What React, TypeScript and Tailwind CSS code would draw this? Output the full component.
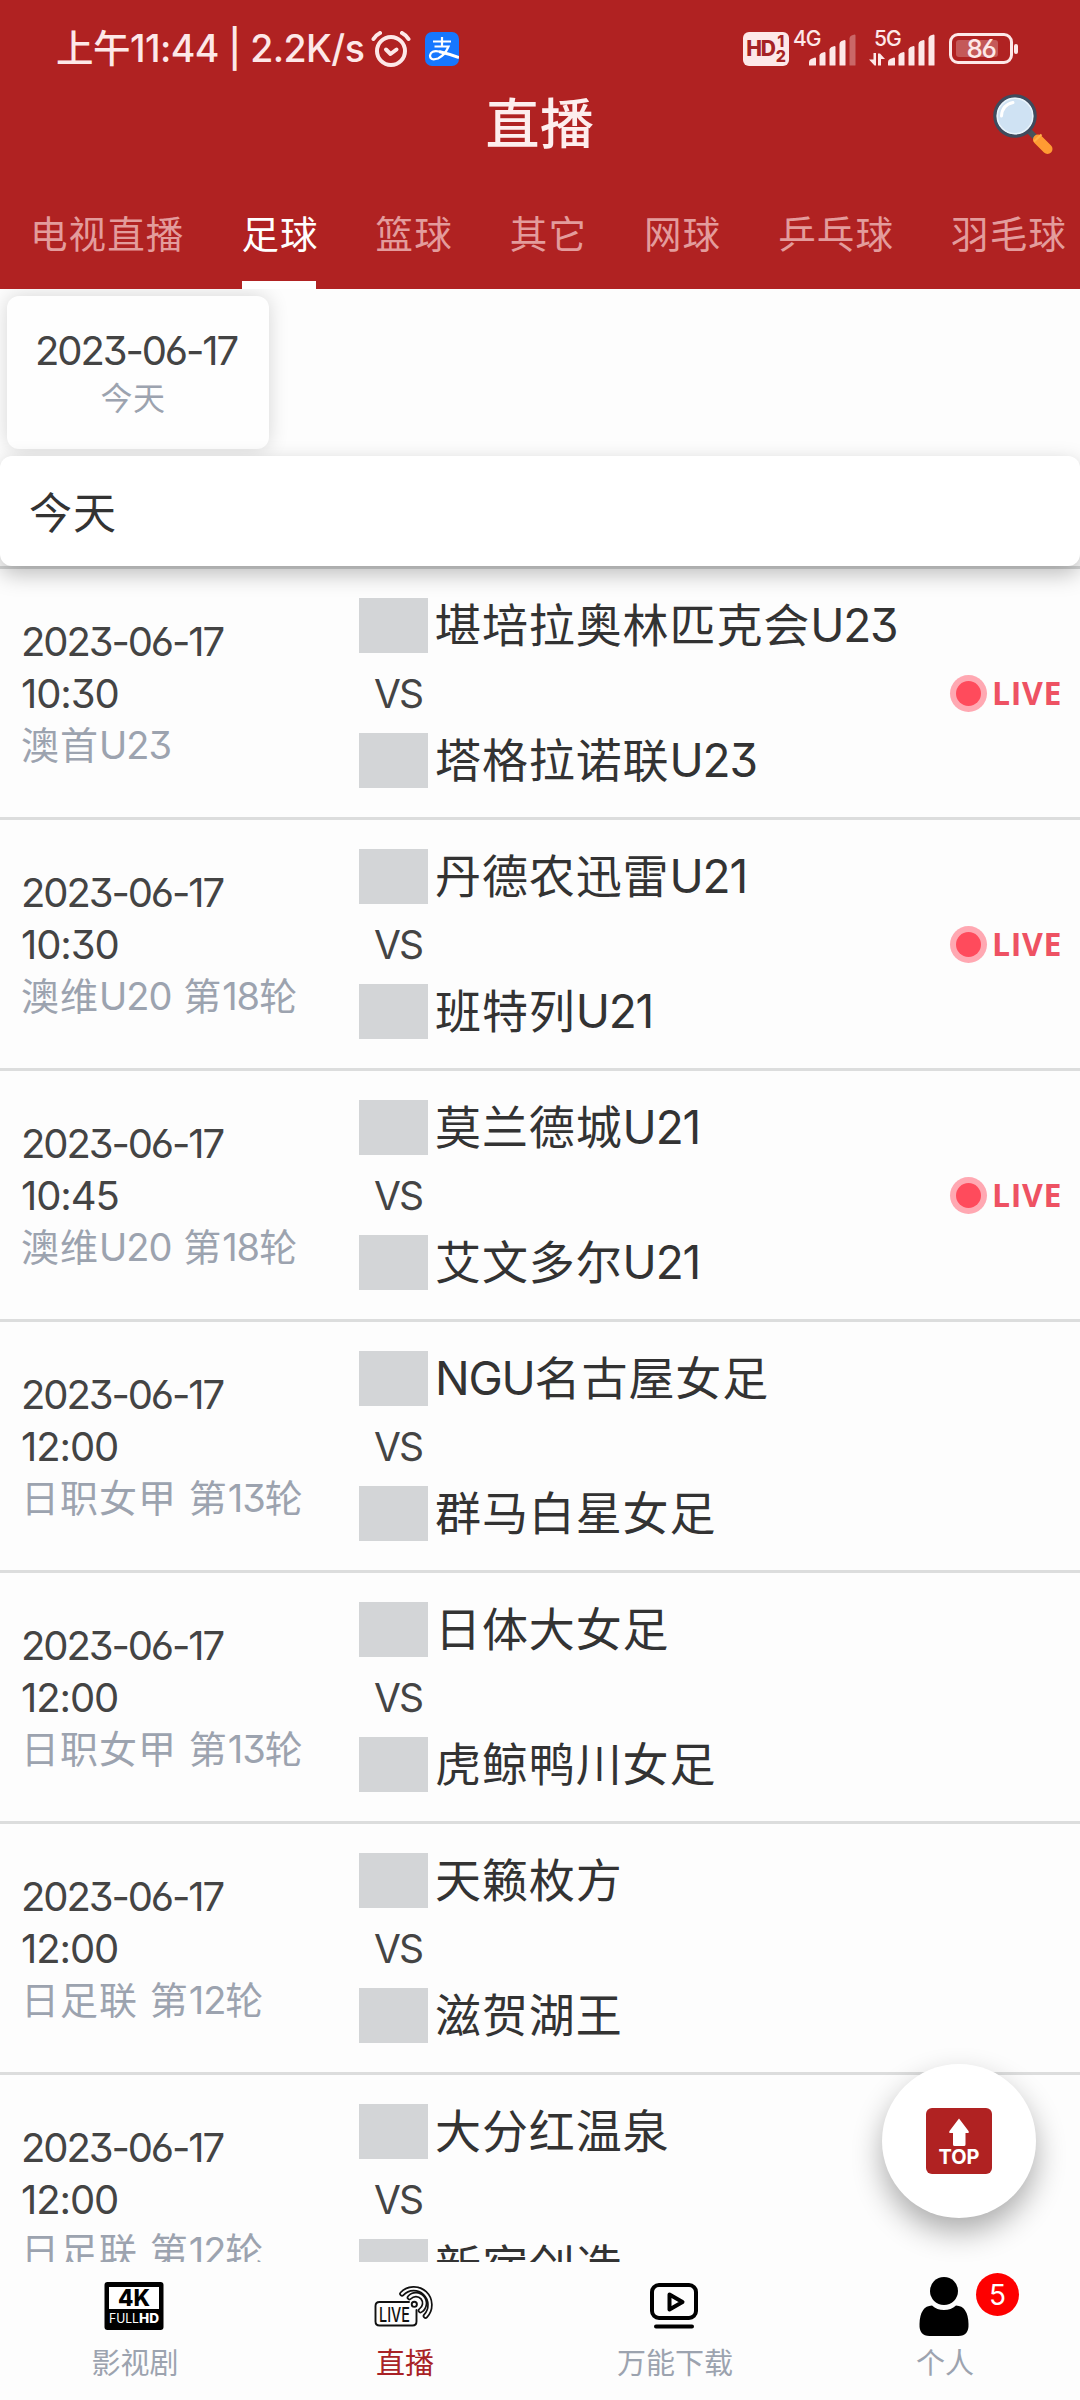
import React from "react";

const tabs = ["电视直播", "足球", "篮球", "其它", "网球", "乒乓球", "羽毛球"];

type Match = { time: string; league: string; home: string; away: string; live?: boolean };

const matches: Match[] = [
  { time: "10:30", league: "澳首U23", home: "堪培拉奥林匹克会U23", away: "塔格拉诺联U23", live: true },
  { time: "10:30", league: "澳维U20 第18轮", home: "丹德农迅雷U21", away: "班特列U21", live: true },
  { time: "10:45", league: "澳维U20 第18轮", home: "莫兰德城U21", away: "艾文多尔U21", live: true },
  { time: "12:00", league: "日职女甲 第13轮", home: "NGU名古屋女足", away: "群马白星女足" },
  { time: "12:00", league: "日职女甲 第13轮", home: "日体大女足", away: "虎鲸鸭川女足" },
  { time: "12:00", league: "日足联 第12轮", home: "天籁枚方", away: "滋贺湖王" },
  { time: "12:00", league: "日足联 第12轮", home: "大分红温泉", away: "新宿创造" },
];

/* Latin runs are set tighter than the Chinese ones; spaces stay with the Chinese spacing. */
function Mixed({ text, latin }: { text: string; latin: string }) {
  const runs = text.match(/[\x21-\x7e]+|[^\x21-\x7e]+/g) ?? [];
  return (
    <>
      {runs.map((r, i) => (/^[\x21-\x7e]/.test(r) ? <span key={i} className={latin}>{r}</span> : <span key={i}>{r}</span>))}
    </>
  );
}

function Bars({ dim }: { dim?: boolean }) {
  return (
    <svg width="48" height="32" viewBox="0 0 48 32" fill="#fde8e8">
      <path d="M0 31v-3q0-2 2-3l4-1.500q1 0 1 1V31q0 .5-.5.5h-6Q0 31.500 0 31Z" />
      <path d="M10.500 31V21.500q0-1.500 2-2.500l3-1q1 0 1 1v12q0 .5-.5.5h-5Q10.500 31.500 10.500 31Z" />
      <path d="M20.500 31V15.500q0-1.500 2-2.500l3-1q1 0 1 1v18q0 .5-.5.5h-5Q20.500 31.500 20.500 31Z" />
      <path d="M30.500 31V10q0-2 2-3l3-1q1 0 1 1v24q0 .5-.5.5h-5Q30.500 31.500 30.500 31Z" />
      <path opacity={dim ? 0.35 : 1} d="M40.500 31V4.500q0-2 2-3l3-1q1 0 1 1V31q0 .5-.5.5h-5Q40.500 31.500 40.500 31Z" />
    </svg>
  );
}

function StatusBar() {
  return (
    <div className="flex h-[98px] items-start pl-[56px] pr-[62px] pt-[31px] text-[#fde8e8]">
      <div className="flex h-9 w-[315px] items-center whitespace-nowrap text-[37.5px] font-medium leading-9 tracking-[-0.55px]">
        上午11:44 | 2.2K/s
      </div>
      <svg className="h-9 w-10" viewBox="0 0 40 36" fill="none" stroke="#fde8e8" strokeWidth="4" strokeLinecap="round" strokeLinejoin="round">
        <circle cx="20" cy="20" r="14" />
        <path d="M2.500 8Q5 4 9 2M37.500 8Q35 4 31 2" />
        <path d="m15 18.500 4.500 4.500 6-4.500" />
      </svg>
      <svg className="ml-3.5 mt-px h-[34px] w-[34px]" viewBox="0 0 34 34">
        <rect width="34" height="34" rx="7" fill="#1677ff" />
        <g fill="none" stroke="#fff" strokeWidth="2.200">
          <path d="M8 9.500h18M17 5v9.500M9.500 14.500h14Q20 23 13 26.500 5 29 5 23.500 6 18 14 19.500" />
          <path d="M14 19.500Q24 22 34 25.500" strokeWidth="3" />
        </g>
      </svg>
      <div className="ml-auto flex h-9 items-start pt-px">
        <div className="flex h-[34px] w-[46px] items-center justify-center gap-px rounded-[6px] bg-[#fde8e8] text-[#a52224]">
          <span className="text-[21px] font-extrabold leading-5 tracking-[-1.2px]">HD</span>
          <span className="flex flex-col items-center text-[16px] font-extrabold leading-[15px]">
            <span>1</span>
            <span>2</span>
          </span>
        </div>
        <div className="relative ml-5 h-[34px] w-12 pt-0.5">
          <span className="absolute -left-4 -top-[3px] text-[21px] font-medium leading-5 tracking-[-1px]">4G</span>
          <Bars dim />
        </div>
        <div className="relative ml-[31px] h-[34px] w-12 pt-0.5">
          <span className="absolute -left-3.5 -top-[3px] text-[21px] font-medium leading-5 tracking-[-1px]">5G</span>
          <svg className="absolute -left-[19px] top-[21px]" width="16" height="13" viewBox="0 0 16 13" fill="#fde8e8">
            <path d="M4.500 0H7v12.500H5.500L0 6.500h4.500ZM9 .5h2l5 5.500h-4v6.500H9Z" />
          </svg>
          <Bars />
        </div>
        <div className="ml-[13px] mt-px flex items-center">
          <div className="relative flex h-[31px] w-[64px] items-center justify-center rounded-[9px] border-[3px] border-[#fde8e8]">
            <div className="absolute left-[4px] top-[4px] h-[17px] w-[42px] rounded-[3px] bg-white/25" />
            <span className="relative text-[26px] font-medium leading-6 tracking-[-1.5px]">86</span>
          </div>
          <div className="ml-px h-2.5 w-1 rounded-sm bg-[#fde8e8]" />
        </div>
      </div>
    </div>
  );
}

function Magnifier() {
  return (
    <svg className="h-[62px] w-[60px]" viewBox="0 0 60 62">
      <path d="m36 38 7 7" stroke="#46535c" strokeWidth="6" />
      <path d="m45 46.500 9.500 9.500" stroke="#ff9b33" strokeWidth="10" strokeLinecap="round" />
      <path d="m41 48.500 7.500-7" stroke="#ffb24a" strokeWidth="2" />
      <circle cx="22" cy="23" r="20" fill="#cfe2f3" stroke="#3f4b5d" strokeWidth="3.500" />
      <circle cx="22" cy="23" r="17.800" fill="none" stroke="#eaf4fb" strokeWidth="1.500" />
      <path d="M8.500 23Q9 12 20 9.500" fill="none" stroke="#fff" strokeWidth="3" strokeLinecap="round" />
    </svg>
  );
}

function Team({ name }: { name: string }) {
  return (
    <div className="flex h-[55px] items-center">
      <div className="h-[55px] w-[69px] bg-[#d3d5d7]" />
      <div className="ml-[7px] text-[46px] leading-[55px] tracking-[0.9px]">
        <Mixed text={name} latin="tracking-[-1.2px]" />
      </div>
    </div>
  );
}

function MatchRow({ m }: { m: Match }) {
  return (
    <div className="flex h-[251px] shrink-0 border-b-[3px] border-[#dcdddd]">
      <div className="w-[359px] shrink-0 whitespace-nowrap pl-[21px] pt-[47px] text-[40px] leading-[52px] text-[#444]">
        <div className="tracking-[-2.1px]">2023-06-17</div>
        <div className="tracking-[-1.1px]">{m.time}</div>
        <div className="-mt-px text-[38px] tracking-[1px] text-[#9ca3af]">
          <Mixed text={m.league} latin="tracking-[-1px]" />
        </div>
      </div>
      <div className="flex flex-1 flex-col whitespace-nowrap pt-[29px] text-[#333]">
        <Team name={m.home} />
        <div className="flex h-20 items-center pl-[15px] pt-px text-[39px] leading-[52px] tracking-[-2px] text-[#444]">VS</div>
        <Team name={m.away} />
      </div>
      {m.live && (
        <div className="flex w-[130px] items-center">
          <div className="flex h-[37px] w-[37px] shrink-0 items-center justify-center rounded-full bg-[#ffa8b2]">
            <div className="h-[25px] w-[25px] rounded-full bg-[#ff4b5c]" />
          </div>
          <span className="ml-[5px] font-['Open_Sans'] text-[32px] font-bold leading-9 tracking-[0.7px] text-[#ee5263]">LIVE</span>
        </div>
      )}
    </div>
  );
}

const Icon4K = () => (
  <svg width="60" height="48" viewBox="0 0 60 48">
    <rect x=".5" width="59" height="48" rx="3" fill="#000" />
    <rect x="5" y="5" width="50" height="22" fill="#fff" />
    <text x="30" y="24" textAnchor="middle" textLength="32" lengthAdjust="spacingAndGlyphs" fontFamily="Inter" fontWeight="800" fontSize="23">4K</text>
    <text x="5" y="41" textLength="30" lengthAdjust="spacingAndGlyphs" fontFamily="Inter" fontSize="13" fill="#fff">FULL</text>
    <text x="35" y="41" textLength="20" lengthAdjust="spacingAndGlyphs" fontFamily="Inter" fontWeight="800" fontSize="13" fill="#fff">HD</text>
  </svg>
);

const IconLive = () => (
  <svg width="60" height="42" viewBox="0 0 60 42" fill="none" stroke="#111" strokeWidth="1.900" strokeLinecap="round">
    <path d="M35 17H5.500Q1.500 17 1.500 21v15.500q0 4 4 4h33q4 0 4-4V25" />
    <circle cx="40.300" cy="19.300" r="2.600" />
    <g strokeWidth="5.600">
      <path d="M28 8.800A16 16 0 1 1 51.500 31" />
      <path d="M35.500 12.500A8.600 8.600 0 1 1 46.500 25.500" />
    </g>
    <g stroke="#fdfdfd" strokeWidth="2.200">
      <path d="M28 8.800A16 16 0 1 1 51.500 31" />
      <path d="M35.500 12.500A8.600 8.600 0 1 1 46.500 25.500" />
    </g>
    <text x="5" y="36.500" textLength="31" lengthAdjust="spacingAndGlyphs" fontFamily="Inter" fontWeight="500" fontSize="20" fill="#111" stroke="none">LIVE</text>
  </svg>
);

const IconPlay = () => (
  <svg width="48" height="46" viewBox="0 0 48 46" fill="none" stroke="#000" strokeWidth="4" strokeLinecap="round" strokeLinejoin="round">
    <rect x="2" y="2" width="44" height="33" rx="7" />
    <path d="m19.500 11.500 13 7.500-13 7.500ZM6 43.500h36" />
  </svg>
);

const IconUser = () => (
  <svg width="50" height="59" viewBox="0 0 50 59">
    <circle cx="25" cy="14" r="14" />
    <path d="M13 28.500Q18 33 25 33t12-4.500Q49 29 49.500 47q.5 12-10 12h-29Q0 59 .5 47 1 29 13 28.500Z" />
  </svg>
);

const navItems = [
  { label: "影视剧", icon: <Icon4K /> },
  { label: "直播", icon: <IconLive />, active: true },
  { label: "万能下载", icon: <IconPlay /> },
  { label: "个人", icon: <IconUser />, badge: "5" },
];

export default function App() {
  return (
    <div
      className={`relative flex h-[2400px] w-[1080px] flex-col overflow-hidden bg-[#fdfdfd] font-["Inter","Noto_Sans_CJK_SC",sans-serif] [font-feature-settings:"cv09","cv03","cv04"]`}
      lang="zh-CN"
    >
      <header className="relative z-10 flex h-[289px] shrink-0 flex-col bg-[#b02222]">
        <StatusBar />
        <div className="flex h-[54px] items-center justify-between">
          <div className="w-[87px]" />
          <h1 className="text-[54px] font-medium leading-[54px] tracking-[0.5px] text-[#fdeeee]">直播</h1>
          <div className="-mt-0.5 w-[87px]"><Magnifier /></div>
        </div>
        <nav className="flex flex-1 gap-[57px] pl-[30px]">
          {tabs.map((t, i) => (
            <div key={t} className={i === 1 ? "flex shrink-0 flex-col justify-between text-white" : "shrink-0 text-[#e39c9c]"}>
              <div className="whitespace-nowrap pt-[56px] text-[37.5px] leading-[54px] tracking-[1.1px]">{t}</div>
              {i === 1 && <div className="ml-px h-2 w-[74px] bg-white" />}
            </div>
          ))}
        </nav>
      </header>

      <div className="h-[167px] shrink-0 pl-[7px] pt-[7px]">
        <div className="flex h-[153px] w-[262px] flex-col items-center rounded-xl bg-[#fefefe] pr-1 pt-[29px] shadow-[0_0_20px_rgba(0,0,0,0.16)]">
          <div className="text-[40px] leading-[52px] tracking-[-2.1px] text-[#444]">2023-06-17</div>
          <div className="pr-1.5 text-[32px] leading-[43px] tracking-[0.5px] text-[#9ca3af]">今天</div>
        </div>
      </div>

      <div className="relative z-[1] flex h-[110px] shrink-0 items-center rounded-xl bg-white pl-[29px] pt-1 text-[43px] tracking-[1px] text-[#333] shadow-[0_8px_22px_rgba(0,0,0,0.26)]">
        今天
      </div>

      <main className="flex min-h-0 flex-1 flex-col overflow-hidden border-t-[3px] border-[#d6d7d7]">
        {matches.map((m, i) => <MatchRow key={i} m={m} />)}
      </main>

      <footer className="flex h-[138px] shrink-0 bg-[#fdfdfd]">
        {navItems.map((n) => (
          <div key={n.label} className="relative flex w-[270px] flex-col items-center">
            <div className="mt-3 flex h-[64px] items-center pr-0.5">{n.icon}</div>
            <div className={n.active ? "mt-2 text-[29px] leading-9 text-[#a82226]" : "mt-2 text-[29px] leading-9 text-[#9ca3af]"}>{n.label}</div>
            {n.badge && (
              <span className="absolute left-[166px] top-[11px] flex h-[43px] w-[43px] items-center justify-center rounded-full bg-[#fe0000] text-[28px] leading-none text-white">{n.badge}</span>
            )}
          </div>
        ))}
      </footer>

      <button className="absolute left-[882px] top-[2064px] z-20 flex h-[154px] w-[154px] items-center justify-center rounded-full bg-white shadow-[0_14px_30px_rgba(0,0,0,0.32)]">
        <svg width="66" height="66" viewBox="0 0 66 66">
          <rect width="66" height="66" rx="6" fill="#b02222" />
          <path d="M33 10.500 42.500 23q1 2-1 2H39.500V36.500q0 1.500-1.500 1.500H28.500Q27 38 27 36.500V25H24.500q-2 0-1-2Z" fill="#fff" />
          <text x="33" y="56" textAnchor="middle" textLength="41" lengthAdjust="spacingAndGlyphs" fontFamily="Inter" fontWeight="700" fontSize="20" fill="#fff">TOP</text>
        </svg>
      </button>
    </div>
  );
}
